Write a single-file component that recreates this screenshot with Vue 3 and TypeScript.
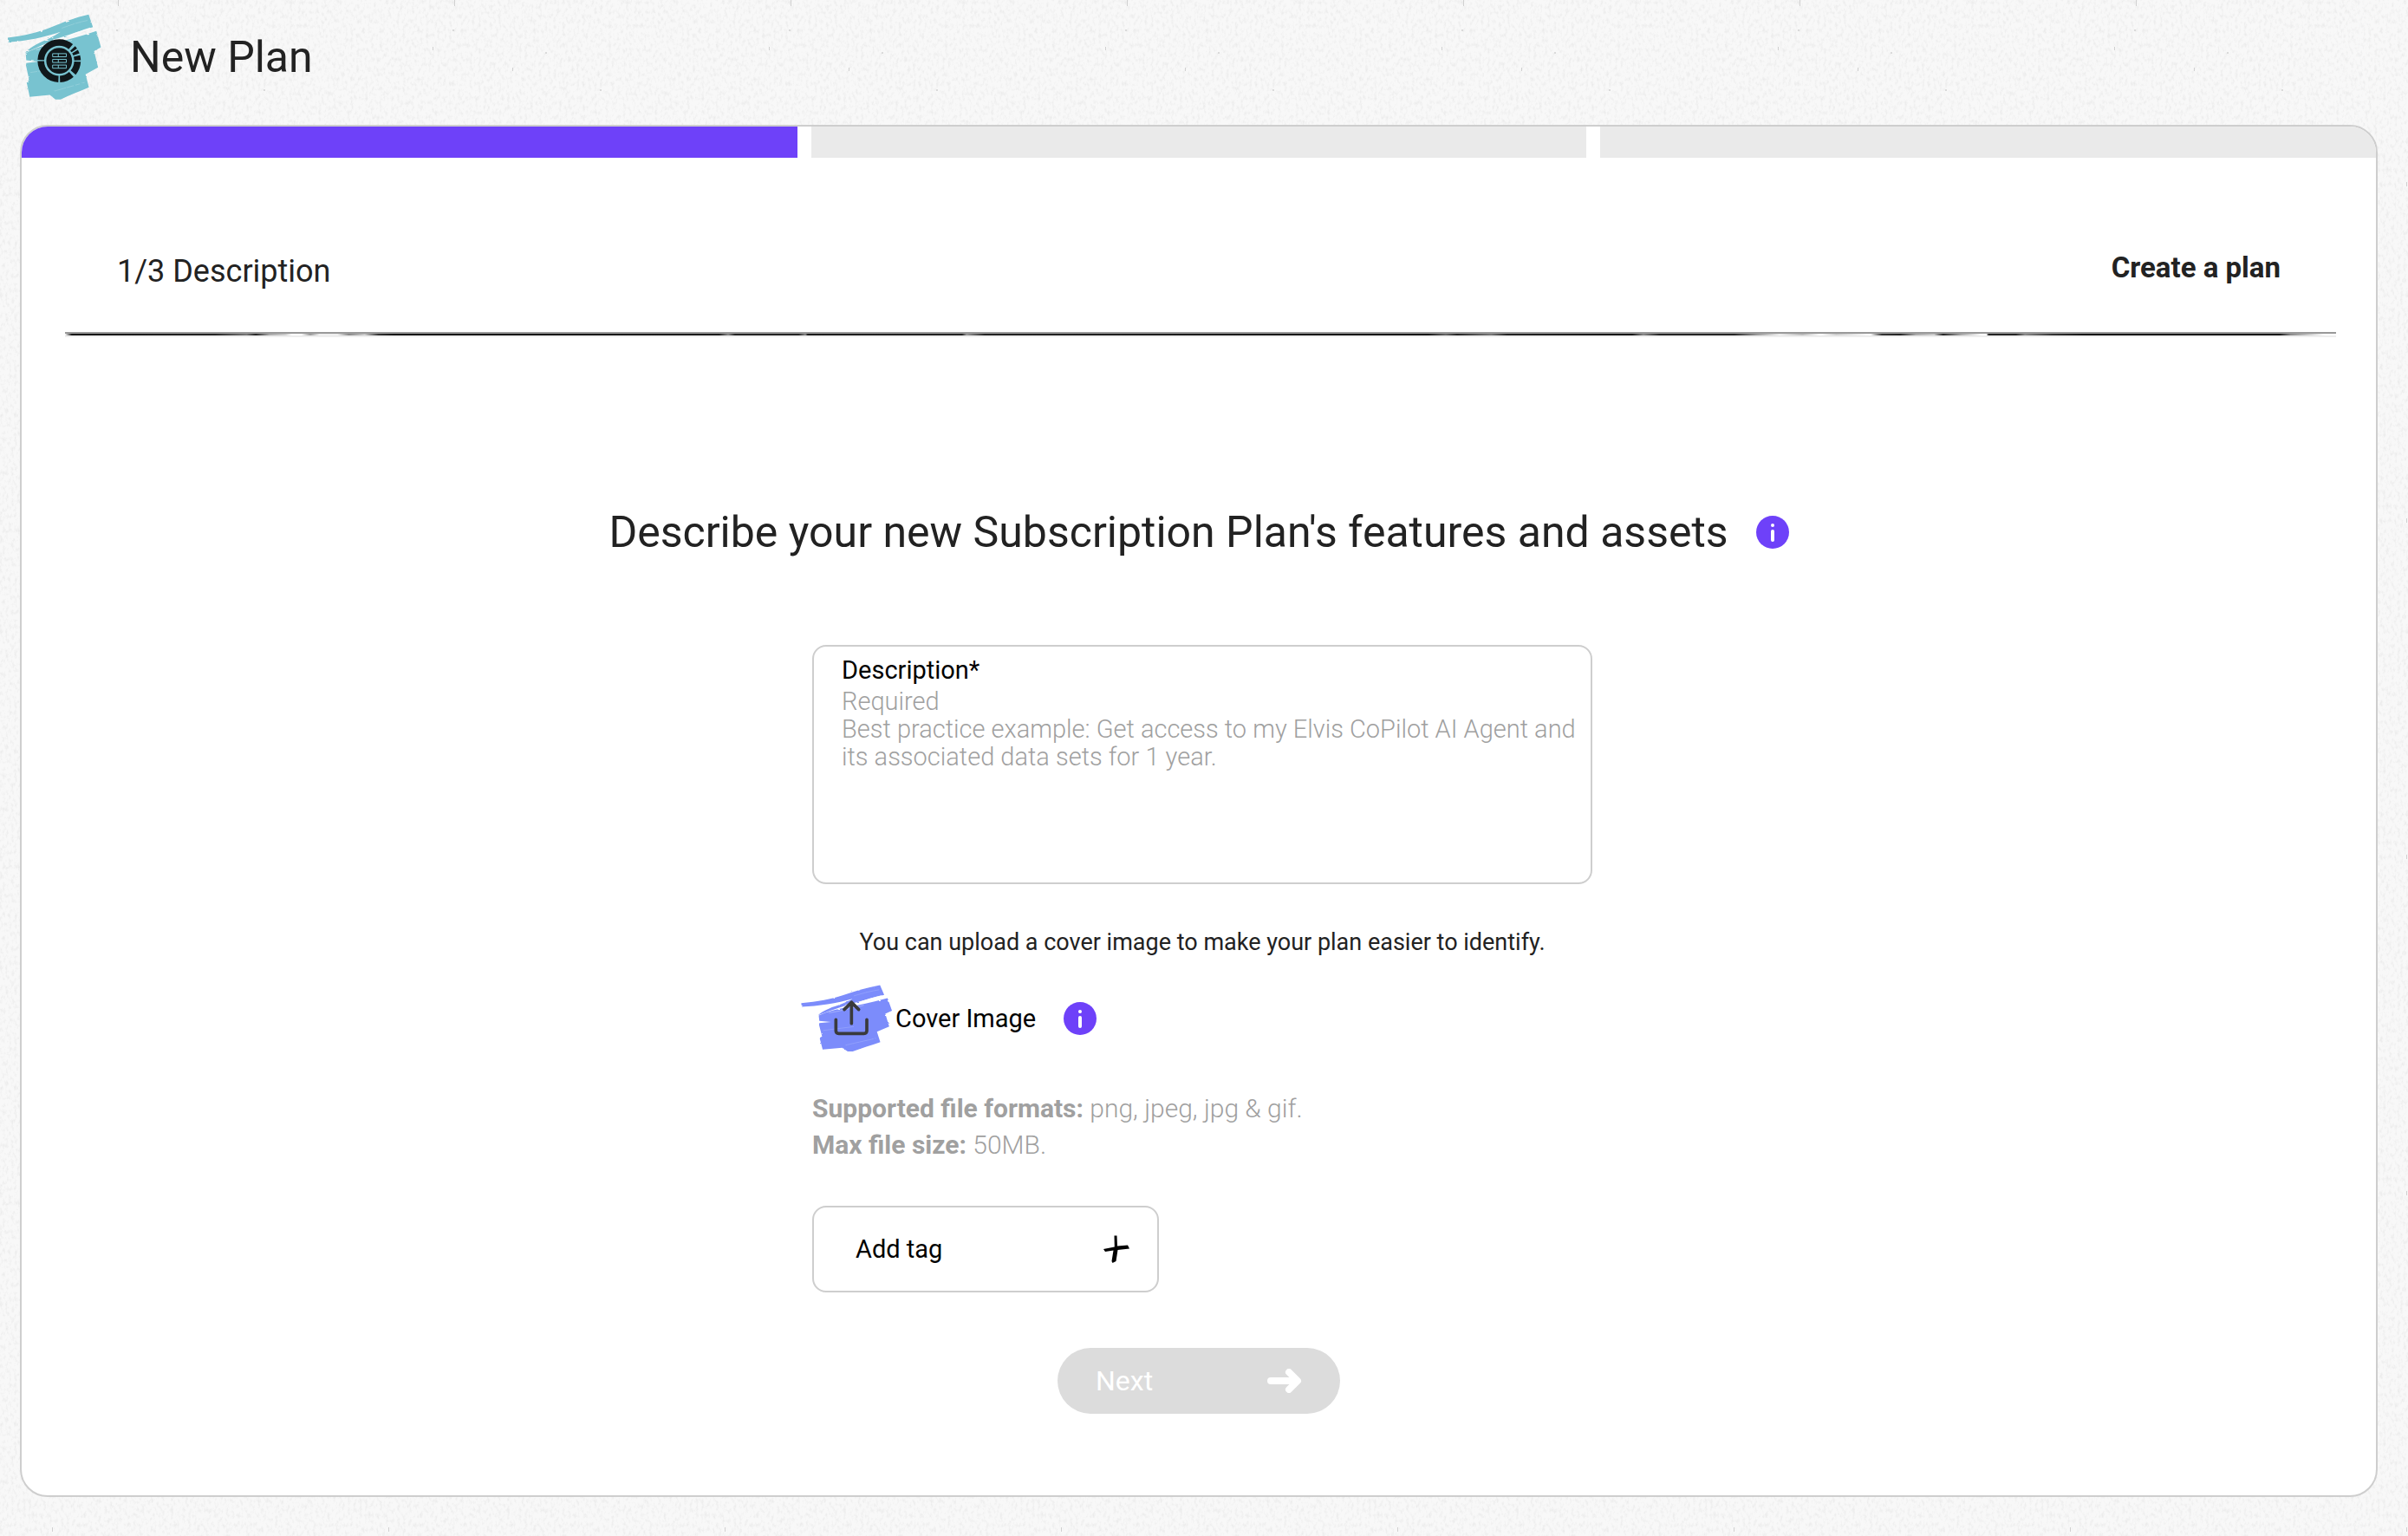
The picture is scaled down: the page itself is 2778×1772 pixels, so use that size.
<script setup lang="ts">
import { computed, ref } from 'vue'

const steps: string[] = ['Description', 'Assets', 'Pricing']
const current = ref(0)
const description = ref('')
const canContinue = computed(() => description.value.trim().length > 0)
const placeholder =
  'Required\nBest practice example: Get access to my Elvis CoPilot AI Agent and its associated data sets for 1 year.'

function next(): void {
  if (current.value < steps.length - 1) current.value += 1
}
</script>

<template>
  <div class="page">
    <svg class="defs" aria-hidden="true">
      <defs>
        <filter id="rough" x="-2%" y="-2%" width="104%" height="104%">
          <feTurbulence type="fractalNoise" baseFrequency="0.04 0.12" numOctaves="2" seed="4" />
          <feDisplacementMap in="SourceGraphic" scale="7" />
        </filter>
        <symbol id="brush" viewBox="0 0 330 303" preserveAspectRatio="none">
          <g filter="url(#rough)">
            <path d="M1 83C60 77 110 64 150 48C190 31 235 13 284 2L299 46C262 57 232 66 205 79C160 92 112 113 62 137C72 122 100 104 138 90C160 79 176 70 186 63C130 82 62 96 3 99Z" />
            <path d="M64 138C96 119 130 110 166 100C214 91 262 77 311 60L327 117L303 130L317 187L273 211L285 257C252 271 218 284 186 299H168L148 283L78 290L67 238L76 232L65 180L66 172L108 167L66 162Z" />
            <path d="M160 92C204 82 240 66 290 50" fill="none" stroke="#fff" stroke-width="5" opacity=".8" />
            <path d="M100 126C142 118 175 107 226 92" fill="none" stroke="#fff" stroke-width="3" opacity=".35" />
            <path d="M190 50C220 39 255 27 280 23M80 205L190 188M160 271L270 240" fill="none" stroke="#fff" stroke-width="3" opacity=".18" />
          </g>
        </symbol>
        <symbol id="info" viewBox="0 0 38 38">
          <circle cx="19" cy="19" r="19" />
          <circle cx="19" cy="11" r="2" fill="#fff" />
          <path d="M19 18V28" stroke="#fff" stroke-width="4" stroke-linecap="round" />
        </symbol>
      </defs>
    </svg>

    <header class="top">
      <svg class="logo" viewBox="0 0 330 303" aria-hidden="true">
        <use href="#brush" width="330" height="303" fill="#78c3d0" />
        <circle cx="181" cy="164" r="64" fill="none" stroke="#10181b" stroke-width="23" pathLength="360"
          stroke-dasharray="0 3 37 8 39 5 86 4 126 8 8 4 10 5 14 3" />
        <circle cx="181" cy="164" r="45" fill="#10181b" />
        <path d="M158 139H206V150H158ZM158 159H206V170H158ZM158 179H206V190H158ZM178 139V150M178 159V170M178 179V190"
          fill="none" stroke="#78c3d0" stroke-width="3" />
      </svg>
      <h1>New Plan</h1>
    </header>

    <main class="card">
      <div class="steps">
        <div v-for="(step, i) in steps" :key="step" class="step" :class="{ active: i <= current }"></div>
      </div>

      <div class="bar">
        <h2>{{ current + 1 }}/{{ steps.length }} {{ steps[current] }}</h2>
        <a class="create" href="#">Create a plan</a>
      </div>
      <div class="rule"></div>

      <div class="title">
        <h3>Describe your new Subscription Plan's features and assets</h3>
        <button class="info" type="button" aria-label="About plans"><svg><use href="#info" /></svg></button>
      </div>

      <form @submit.prevent="next">
        <div class="column">
          <div class="field">
            <label for="description">Description*</label>
            <textarea id="description" v-model="description" :placeholder="placeholder"></textarea>
          </div>

          <p class="hint">You can upload a cover image to make your plan easier to identify.</p>

          <div class="cover">
            <button class="upload" type="button">
              <svg viewBox="0 0 318 234" aria-hidden="true">
                <use href="#brush" width="318" height="234" fill="#7b8cfb" />
                <path d="M175 134V60M150 86L175 61L200 86M121 121V159Q121 169 131 169H218Q228 169 228 159V121"
                  fill="none" stroke="#3a3a3c" stroke-width="11" stroke-linecap="round" stroke-linejoin="round" />
              </svg>
              <span>Cover Image</span>
            </button>
            <button class="info" type="button" aria-label="About cover images"><svg><use href="#info" /></svg></button>
          </div>

          <p class="limits">
            <strong>Supported file formats:</strong> png, jpeg, jpg &amp; gif.<br />
            <strong>Max file size:</strong> 50MB.
          </p>

          <button class="tag" type="button">
            <span>Add tag</span>
            <svg viewBox="0 0 30 34" aria-hidden="true">
              <path d="M12.500 1.500L15.500 1.500L16 13.500L28 12.500L30 16.500L16.500 18L14.500 31L10.500 33L9.500 31L11.500 18.500L2 20L0 17L12.800 14.500Z" />
            </svg>
          </button>
        </div>

        <button class="next" type="submit" :disabled="!canContinue">
          <span>Next</span>
          <svg viewBox="0 0 40 28" aria-hidden="true">
            <path d="M4 14H34M25 4L35 14L25 24" fill="none" stroke="currentColor" stroke-width="8"
              stroke-linecap="round" stroke-linejoin="round" />
          </svg>
        </button>
      </form>
    </main>
  </div>
</template>

<style>
body {
  margin: 0;
}
</style>

<style scoped>
.page {
  box-sizing: border-box;
  min-height: 100vh;
  padding-bottom: 44px;
  color: #222;
  font-family: Roboto, "Liberation Sans", sans-serif;
  background: #f8f8f8 url("data:image/svg+xml,%3Csvg xmlns='http://www.w3.org/2000/svg' width='388' height='388'%3E%3Cfilter id='n' x='0' y='0' width='100%25' height='100%25'%3E%3CfeTurbulence type='fractalNoise' baseFrequency='.3 .18' numOctaves='3' seed='8' stitchTiles='stitch'/%3E%3CfeColorMatrix values='0 0 0 0 0 0 0 0 0 0 0 0 0 0 0 .12 0 0 0 -.056'/%3E%3C/filter%3E%3Crect width='388' height='388' filter='url(%23n)'/%3E%3Cg fill='%23d0d0d0'%3E%3Cpath d='M136 0h1v7h-1zM111 54h1v4h-1zM203 78h1v4h-1zM340 300h1v6h-1zM60 210h1v5h-1z'/%3E%3Ccircle cx='135' cy='35' r='1'/%3E%3Ccircle cx='242' cy='61' r='1'/%3E%3Ccircle cx='305' cy='104' r='1'/%3E%3Ccircle cx='90' cy='280' r='1'/%3E%3C/g%3E%3C/svg%3E");
}

.defs {
  position: absolute;
  width: 0;
  height: 0;
}

h1,
h2,
h3,
p {
  margin: 0;
  font-weight: 400;
}

button {
  padding: 0;
  border: 0;
  background: none;
  color: inherit;
  font: inherit;
}

button svg {
  display: block;
}

.top {
  display: flex;
  align-items: center;
  gap: 32px;
  padding: 16px 0 28px 8px;
}

.logo {
  width: 110px;
  height: 100px;
}

h1,
h3 {
  font-size: 50px;
  line-height: 56px;
}

.card {
  overflow: hidden;
  margin: 0 35px 0 23px;
  padding-bottom: 94px;
  border: 2px solid #cecece;
  border-radius: 32px;
  background: #fff;
}

.steps {
  display: flex;
  gap: 16px;
}

.step {
  flex: 1;
  height: 36px;
  background: #eaeaea;
}

.step.active {
  background: #6e41f9;
}

.bar {
  display: flex;
  justify-content: space-between;
  padding: 109px 110px 48px;
}

h2 {
  font-size: 36px;
  line-height: 44px;
}

.create {
  color: inherit;
  font-size: 33px;
  font-weight: 700;
  line-height: 36px;
  text-decoration: none;
}

.rule {
  height: 2px;
  margin: 0 46px 0 50px;
  border-top: 2px solid #999;
  border-bottom: 2px solid #eee;
  background: linear-gradient(90deg, #fff, #111 .3%, #222 6.600%, #777 8%, #222 8.400%, #aaa 9%, #ccc 9.700%, #fff 10%, #fff 10.400%, #999 10.800%, #eee 11.200%, #eee 12%, #888 12.500%, #ccc 13.200%, #333 13.800%, #111 14.500%, #1a1a1a 28.800%, #888 29.200%, #222 29.500%, #222 32.300%, #888 32.600%, #1a1a1a 32.700%, #222 39.500%, #999 39.700%, #222 40.500%, #111 60%, #666 60.800%, #222 61.300%, #777 62.800%, #222 63.500%, #111 69%, #888 69.500%, #222 70.200%, #222 73.500%, #999 74.500%, #eee 75.500%, #bbb 76.500%, #fff 77.300%, #ccc 78%, #fff 79.500%, #333 80%, #222 80.800%, #aaa 81.500%, #ccc 82.300%, #222 82.700%, #aaa 83.500%, #fff 84.400%, #fff 84.600%, #222 84.700%, #222 85.900%, #888 86.300%, #333 87.500%, #111 89%, #111 97.500%, #888 98%, #fff 99.500%);
}

.title {
  display: flex;
  align-items: center;
  justify-content: center;
  gap: 32px;
  margin-top: 197px;
}

.info svg {
  width: 38px;
  height: 38px;
  fill: #6e41f9;
}

form {
  display: flex;
  flex-direction: column;
  align-items: center;
}

.column {
  box-sizing: border-box;
  width: 100%;
  max-width: 908px;
  margin-top: 102px;
  padding-left: 8px;
  color: #000;
  font-size: 29px;
}

.field {
  display: flex;
  flex-direction: column;
  gap: 4px;
  padding: 11px 0 0 32px;
  border: 2px solid #cecece;
  border-radius: 16px;
  line-height: 32px;
}

textarea {
  height: 225px;
  padding: 0;
  border: 0;
  outline: 0;
  background: none;
  resize: none;
  font: inherit;
  font-weight: 300;
}

textarea::placeholder {
  color: #a0a0a0;
}

.hint {
  margin-top: 49px;
  color: #222;
  font-size: 27px;
  line-height: 36px;
  text-align: center;
}

.cover {
  display: flex;
  align-items: center;
  gap: 32px;
  margin: 31px 0 0 -13px;
}

.upload {
  display: flex;
  align-items: center;
  gap: 3px;
}

.upload svg {
  width: 106px;
  height: 78px;
}

.limits {
  margin-top: 44px;
  color: #a0a0a0;
  font-size: 30px;
  font-weight: 300;
  line-height: 42px;
}

.limits strong {
  font-weight: 700;
}

.tag {
  display: flex;
  box-sizing: border-box;
  align-items: center;
  justify-content: space-between;
  width: 400px;
  height: 100px;
  margin-top: 49px;
  padding: 0 32px 0 48px;
  border: 2px solid #cecece;
  border-radius: 16px;
}

.tag svg {
  width: 30px;
  height: 34px;
}

.next {
  display: flex;
  box-sizing: border-box;
  align-items: center;
  justify-content: space-between;
  width: 326px;
  height: 76px;
  margin-top: 64px;
  padding: 0 44px;
  border-radius: 38px;
  background: #6e41f9;
  color: #fff;
  font-size: 32px;
}

.next:disabled {
  background: #dcdcdc;
}

.next svg {
  width: 40px;
  height: 28px;
}
</style>
